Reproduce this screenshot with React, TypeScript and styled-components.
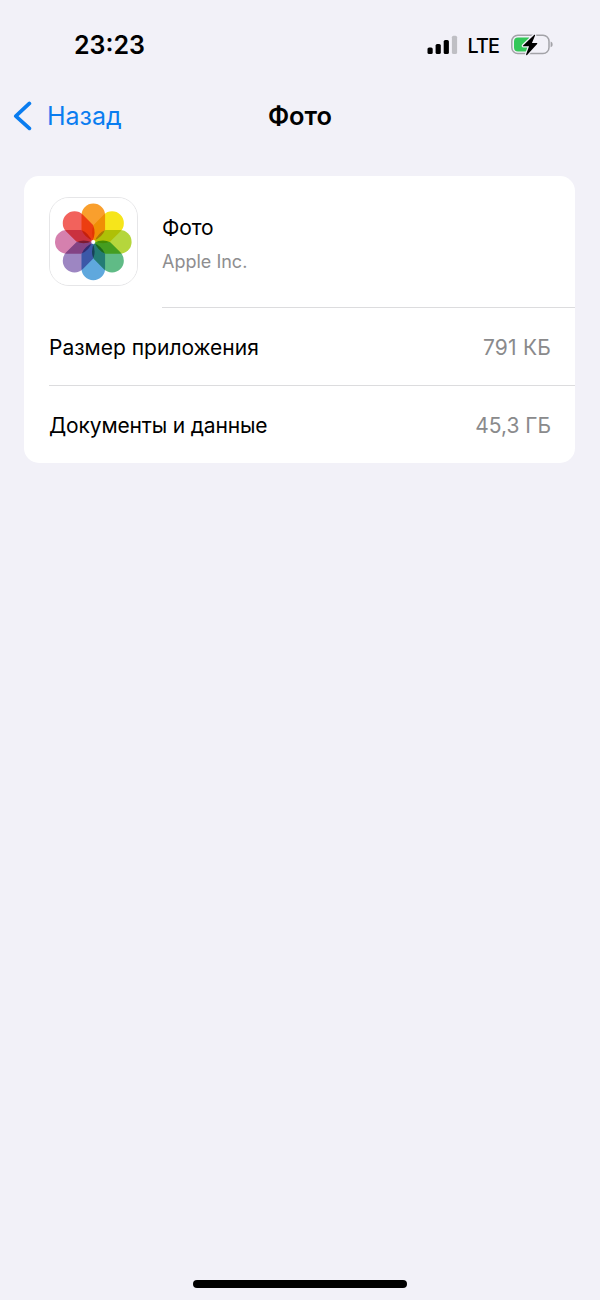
import React from "react";
import styled, { createGlobalStyle } from "styled-components";

const GlobalStyle = createGlobalStyle`
  * { box-sizing: border-box; }
  body {
    margin: 0;
    background: #f2f1f8;
    font-family: Inter, "Liberation Sans", sans-serif;
    color: #000;
  }
`;

const Screen = styled.div`
  width: 600px;
  height: 1300px;
  display: flex;
  flex-direction: column;
  background: #f2f1f8;
`;

const Text = styled.span<{ $size: number; $spacing?: number; $weight?: number; $color?: string }>`
  font-size: ${(p) => p.$size}px;
  letter-spacing: ${(p) => p.$spacing ?? 0}px;
  font-weight: ${(p) => p.$weight ?? 400};
  color: ${(p) => p.$color ?? "#000"};
  line-height: 30px;
  white-space: nowrap;
`;

const StatusBar = styled.header`
  height: 90px;
  padding: 0 47px 0 74px;
  display: flex;
  align-items: center;
  justify-content: space-between;
`;

const StatusIcons = styled.div`
  display: flex;
  align-items: center;
`;

const Network = styled(Text)`
  margin: 1px 12px 0 10px;
`;

const NavBar = styled.nav`
  height: 52px;
  padding: 0 13px;
  display: grid;
  grid-template-columns: 1fr auto 1fr;
  align-items: center;
`;

const BackButton = styled.a`
  display: flex;
  align-items: center;
  gap: 15px;
`;

const Card = styled.section`
  margin: 34px 25px 0 24px;
  height: 287px;
  border-radius: 15px;
  background: #fff;
`;

const AppRow = styled.div`
  height: 132px;
  display: flex;
  padding-left: 25px;
`;

const IconFrame = styled.div`
  width: 89px;
  height: 89px;
  margin: 21px 24px 0 0;
  border: 1px solid #e6e6e8;
  border-radius: 20px;
  overflow: hidden;
`;

const AppInfo = styled.div`
  flex: 1;
  display: flex;
  flex-direction: column;
  gap: 4px;
  padding-top: 37px;
  border-bottom: 1px solid #dcdcde;
`;

const Row = styled.div<{ $divided?: boolean }>`
  height: ${(p) => (p.$divided ? 78 : 77)}px;
  margin-left: 25px;
  padding-right: 24px;
  padding-top: 3px;
  display: flex;
  align-items: center;
  justify-content: space-between;
  border-bottom: ${(p) => (p.$divided ? "1px solid #dcdcde" : "none")};
`;

const HomeArea = styled.footer`
  margin-top: auto;
  padding-bottom: 12px;
  display: flex;
  justify-content: center;
`;

const HomeIndicator = styled.div`
  width: 214px;
  height: 8px;
  border-radius: 4px;
  background: #000;
`;

const Petal = styled.path`
  mix-blend-mode: multiply;
`;

const Flower = styled.svg`
  display: block;
  isolation: isolate;
`;

const petals = ["#f99f2d", "#f6e51b", "#b5d63c", "#60bb86", "#5fa8dd", "#9d86c2", "#d580ae", "#f2625c"];

const petalPath = "M-11.8-26.5a11.8 11.8 0 0 1 23.6 0V-12.2Q8.8-4.3 0-1.2Q-8.8-4.3-11.8-12.2z";

const PhotosIcon = () => (
  <Flower width="87" height="87" viewBox="-43.3 -43.9 87 87">
    <rect x="-45" y="-45" width="90" height="90" fill="#fff" />
    {petals.map((color, i) => (
      <Petal key={color} d={petalPath} fill={color} transform={`rotate(${i * 45})`} />
    ))}
    <circle r="2" fill="#fff" />
  </Flower>
);

const SignalIcon = () => (
  <svg width="31" height="20" viewBox="0 0 31 20">
    <rect x="0.5" y="12.5" width="5.2" height="6.5" rx="1.6" />
    <rect x="8.6" y="8.9" width="5.2" height="10.1" rx="1.6" />
    <rect x="16.7" y="4.9" width="5.2" height="14.1" rx="1.6" />
    <rect x="24.9" y="0.7" width="5.2" height="18.3" rx="1.6" fill="#bfbfc4" />
  </svg>
);

const BatteryIcon = () => (
  <svg width="42" height="24" viewBox="0 0 42 24">
    <rect x="0.8" y="2.2" width="37.2" height="18.4" rx="6" fill="none" stroke="#a3a3a8" strokeWidth="1.5" />
    <path d="M39.6 8.6c1.4.5 2 1.5 2 2.8s-.6 2.3-2 2.8z" fill="#a3a3a8" />
    <path d="M7 4.4h11v14H7a4 4 0 0 1-4-4v-6a4 4 0 0 1 4-4z" fill="#34c759" />
    <path
      d="M23.6 1.9 12.3 12.7c-.4.5-.2 1 .4 1h5.7l-3 8.3c-.3.8.5 1.1 1 .6l10.3-11.3c.4-.5.2-1-.4-1h-4.9l3.2-7.8c.3-.8-.4-1.2-1-.6z"
      fill="#000"
      stroke="#f2f1f8"
      strokeWidth="2.6"
      paintOrder="stroke"
      transform="translate(0.2 0.2) scale(0.97 0.96)"
    />
  </svg>
);

const BackIcon = () => (
  <svg width="19" height="30" viewBox="0 0 19 30">
    <path d="M16.4 2.4 2.8 15.1 16.4 27.4" fill="none" stroke="#0a7df0" strokeWidth="3.7" strokeLinecap="round" strokeLinejoin="round" />
  </svg>
);

export default function App() {
  return (
    <Screen>
      <GlobalStyle />
      <StatusBar>
        <Text $size={25} $weight={600}>23:23</Text>
        <StatusIcons>
          <SignalIcon />
          <Network $size={19.8} $weight={500} $spacing={-0.9}>LTE</Network>
          <BatteryIcon />
        </StatusIcons>
      </StatusBar>
      <NavBar>
        <BackButton>
          <BackIcon />
          <Text $size={25} $color="#0a7df0">Назад</Text>
        </BackButton>
        <Text $size={25.4} $weight={600}>Фото</Text>
      </NavBar>
      <Card>
        <AppRow>
          <IconFrame><PhotosIcon /></IconFrame>
          <AppInfo>
            <Text $size={21} $spacing={-0.1}>Фото</Text>
            <Text $size={18} $color="#8e8e90">Apple Inc.</Text>
          </AppInfo>
        </AppRow>
        <Row $divided>
          <Text $size={21}>Размер приложения</Text>
          <Text $size={21} $spacing={0.2} $color="#8a8a8c">791 КБ</Text>
        </Row>
        <Row>
          <Text $size={21} $spacing={-0.15}>Документы и данные</Text>
          <Text $size={21} $color="#8a8a8c">45,3 ГБ</Text>
        </Row>
      </Card>
      <HomeArea><HomeIndicator /></HomeArea>
    </Screen>
  );
}
